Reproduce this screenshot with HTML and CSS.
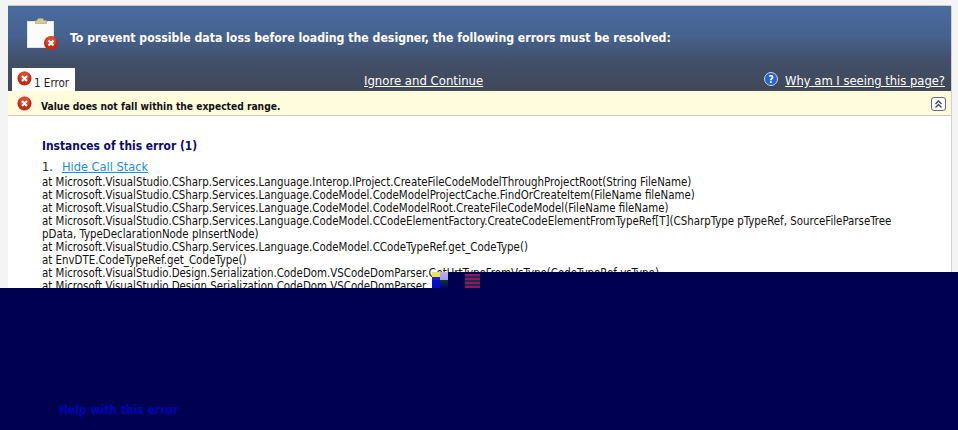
FILE: index.html
```html
<!DOCTYPE html>
<html lang="en">
<head>
<meta charset="utf-8">
<title>Designer errors</title>
<link rel="stylesheet" href="styles.css">
</head>
<body>
<div class="panel">
  <header class="banner">
    <div class="banner-top">
      <svg class="clip-icon" width="32" height="33" viewBox="0 0 32 33">
        <rect x=".5" y="3.500" width="26" height="26" fill="#fbfbfb" stroke="#dfe3ea"/>
        <path d="M11 0.500h5l1 2h2.500v3h-11v-3h1.500z" fill="#d8cb92" stroke="#a89a66" stroke-width=".6"/>
        <circle cx="24" cy="25" r="7" fill="#c22c14"/>
        <circle cx="24" cy="23" r="5" fill="#ea6a4e" opacity=".55"/>
        <path d="M21.500 22.500l5 5m0-5l-5 5" stroke="#fff" stroke-width="2"/>
      </svg>
      <h1 class="banner-title">To prevent possible data loss before loading the designer, the following errors must be resolved:</h1>
    </div>
    <div class="banner-tabs">
      <div class="tab">
        <svg class="err-icon" width="15" height="15" viewBox="0 0 15 15">
          <circle cx="7.500" cy="7.500" r="7" fill="#c22c14"/>
          <circle cx="7.500" cy="5.500" r="5" fill="#ea6a4e" opacity=".55"/>
          <path d="M5 5l5 5m0-5l-5 5" stroke="#fff" stroke-width="2"/>
        </svg>
        <span class="tab-label">1 Error</span>
      </div>
      <a class="link-light ignore" href="#">Ignore and Continue</a>
      <div class="why">
        <svg width="14" height="14" viewBox="0 0 14 14">
          <circle cx="7" cy="7" r="6.500" fill="#2d62c8" stroke="#c4d4ef"/>
          <text x="7" y="10.500" class="q">?</text>
        </svg>
        <a class="link-light link-why" href="#">Why am I seeing this page?</a>
      </div>
    </div>
  </header>
  <div class="message">
    <svg class="msg-icon" width="15" height="15" viewBox="0 0 15 15">
      <circle cx="7.500" cy="7.500" r="7" fill="#c22c14"/>
      <circle cx="7.500" cy="5.500" r="5" fill="#ea6a4e" opacity=".55"/>
      <path d="M5 5l5 5m0-5l-5 5" stroke="#fff" stroke-width="2"/>
    </svg>
    <strong class="msg-text">Value does not fall within the expected range.</strong>
    <span class="collapse">
      <svg width="15" height="14" viewBox="0 0 15 14">
        <rect x=".5" y=".5" width="14" height="13" rx="2.500" fill="#fdfdf5" stroke="#5a6f8f"/>
        <path d="M4.500 7l3-3 3 3M4.500 10.500l3-3 3 3" fill="none" stroke="#34496b" stroke-width="1.300"/>
      </svg>
    </span>
  </div>
  <main class="content">
    <h2 class="section-title">Instances of this error (1)</h2>
    <div class="instance"><span class="num">1.</span><a class="link-blue" href="#">Hide Call Stack</a></div>
    <div class="stack">
      <div>at Microsoft.VisualStudio.CSharp.Services.Language.Interop.IProject.CreateFileCodeModelThroughProjectRoot(String FileName)</div>
      <div>at Microsoft.VisualStudio.CSharp.Services.Language.CodeModel.CodeModelProjectCache.FindOrCreateItem(FileName fileName)</div>
      <div>at Microsoft.VisualStudio.CSharp.Services.Language.CodeModel.CodeModelRoot.CreateFileCodeModel(FileName fileName)</div>
      <div>at Microsoft.VisualStudio.CSharp.Services.Language.CodeModel.CCodeElementFactory.CreateCodeElementFromTypeRef[T](CSharpType pTypeRef, SourceFileParseTree<br>pData, TypeDeclarationNode pInsertNode)</div>
      <div>at Microsoft.VisualStudio.CSharp.Services.Language.CodeModel.CCodeTypeRef.get_CodeType()</div>
      <div>at EnvDTE.CodeTypeRef.get_CodeType()</div>
      <div>at Microsoft.VisualStudio.Design.Serialization.CodeDom.VSCodeDomParser.GetUrtTypeFromVsType(CodeTypeRef vsType)</div>
      <div>at Microsoft.VisualStudio.Design.Serialization.CodeDom.VSCodeDomParser.</div>
    </div>
  </main>
</div>
<div class="overlay-low">
  <span class="help">Help with this error</span>
</div>
<div class="overlay-high">
  <span class="glitch-a"></span>
  <span class="glitch-b"></span>
</div>
</body>
</html>
```
FILE: styles.css
```css
html, body {
  margin: 0;
  height: 100%;
  overflow: hidden;
}
body {
  position: relative;
  background: #f4f4f4;
  padding: 6px 6px 0 8px;
  box-sizing: border-box;
  font-family: "DejaVu Sans Condensed", "DejaVu Sans", sans-serif;
  font-size: 11.400px;
  color: #111;
}
.panel {
  height: 424px;
  background: #fff;
  border-right: 1px solid #d0d0d0;
}
.banner {
  height: 85px;
  background: linear-gradient(#4a6c9f 0%, #46628f 35%, #414f68 65%, #3f4856 100%);
  display: flex;
  flex-direction: column;
  box-shadow: 0 -1px 0 #c8c8c8;
}
.banner-top {
  height: 62px;
  display: flex;
  align-items: center;
  padding-left: 19px;
}
.clip-icon {
  flex: none;
  align-self: flex-start;
  margin-top: 12px;
}
.banner-title {
  margin: 2px 0 0 11px;
  font-size: 12.200px;
  font-weight: bold;
  color: #fff;
}
.banner-tabs {
  flex: 1;
  display: flex;
  align-items: flex-end;
  position: relative;
  padding: 0 6px 3px 4px;
}
.tab {
  position: absolute;
  left: 4px;
  bottom: 0;
  width: 63px;
  height: 23px;
  background: #fff;
  display: flex;
  align-items: flex-end;
}
.err-icon {
  margin: 0 0 5px 5px;
}
.tab-label {
  margin: 0 0 1px 2px;
  font-size: 11.500px;
  color: #222;
}
.link-light {
  color: #fff;
  font-size: 13px;
  text-decoration: underline;
}
.link-why {
  font-size: 12.850px;
}
.ignore {
  margin-left: 352px;
}
.why {
  margin-left: auto;
  display: flex;
  gap: 7px;
  align-items: flex-start;
}
.why svg {
  margin-top: -1px;
}
.q {
  fill: #fff;
  font-size: 10px;
  font-weight: bold;
  text-anchor: middle;
}
.message {
  height: 25px;
  background: #fefcdc;
  border-bottom: 1px solid #c8c8c0;
  display: flex;
  align-items: center;
  padding: 0 5px 0 9px;
  box-sizing: border-box;
}
.msg-text {
  margin: 7px 0 0 9px;
  font-size: 10.200px;
  color: #111;
}
.collapse {
  margin: 2px 0 0 auto;
  display: flex;
}
.content {
  padding: 20px 0 0 34px;
}
.section-title {
  margin: 0;
  padding-top: 1px;
  font-size: 11.900px;
  line-height: 18px;
  font-weight: bold;
  color: #0a0a6a;
}
.instance {
  margin-top: 3px;
  font-size: 12.700px;
  line-height: 18px;
  color: #222;
}
.num {
  margin-right: 9px;
}
.link-blue {
  color: #1a8fd8;
}
.stack {
  width: 870px;
  line-height: 13px;
  color: #111;
}
.overlay-low {
  position: absolute;
  left: 0;
  right: 0;
  top: 288px;
  bottom: 0;
  background: #000050;
}
.overlay-high {
  position: absolute;
  left: 432px;
  right: 0;
  top: 272px;
  height: 16px;
  background: #000050;
}
.glitch-a {
  position: absolute;
  left: 0;
  top: 0;
  width: 16px;
  height: 16px;
  background:
    linear-gradient(#e8e84a 0 5px, #2020c8 5px 8px) left top / 8px 8px no-repeat,
    linear-gradient(#b8b0ec, #a898e0) right top / 8px 8px no-repeat,
    linear-gradient(#0808e0, #0808c0) left bottom / 8px 8px no-repeat,
    linear-gradient(#0c3a20, #000070) right bottom / 8px 8px no-repeat;
}
.glitch-b {
  position: absolute;
  left: 33px;
  top: 2px;
  width: 15px;
  height: 14px;
  background: repeating-linear-gradient(#a0105a 0 2px, #103050 2px 4px);
}
.help {
  position: absolute;
  left: 59px;
  top: 115px;
  font-size: 12px;
  font-weight: bold;
  color: #0000b8;
}
```
